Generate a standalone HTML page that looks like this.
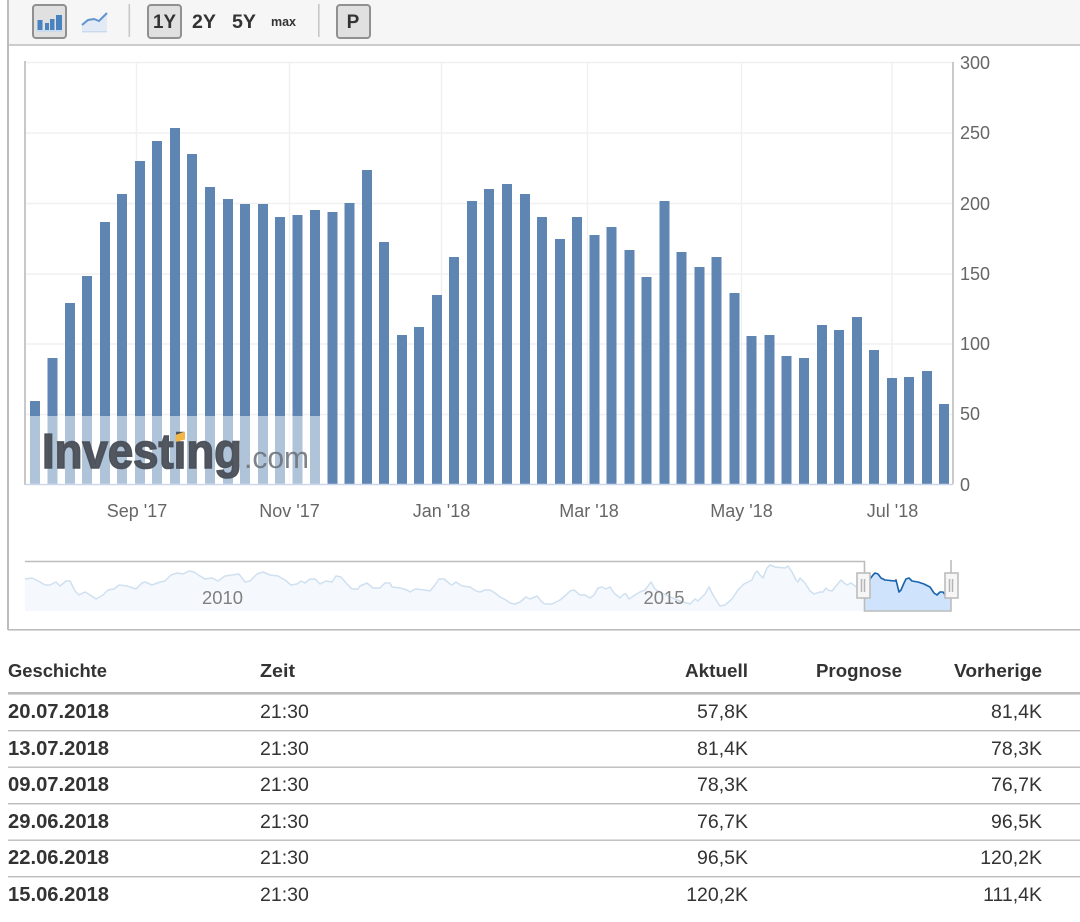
<!DOCTYPE html>
<html>
<head>
<meta charset="utf-8">
<style>
html,body{margin:0;padding:0;background:#fff;width:1080px;height:922px;overflow:hidden}
svg{display:block}
text{font-family:"Liberation Sans",sans-serif}
.ax{font-size:18px;fill:#666}
.h{font-size:18.5px;font-weight:bold;fill:#333}
.d{font-size:20.2px;font-weight:bold;fill:#333}
.t{font-size:19.5px;fill:#333}
.b{font-size:19px;font-weight:bold;fill:#333}
</style>
</head>
<body>
<svg width="1080" height="922" viewBox="0 0 1080 922" xmlns="http://www.w3.org/2000/svg">
<!-- toolbar -->
<rect x="8" y="0" width="1072" height="44" fill="#f6f6f6"/>
<rect x="8" y="44" width="1072" height="2" fill="#cccccc"/>
<rect x="7" y="0" width="2" height="630" fill="#bcbcbc"/>
<rect x="8" y="629" width="1072" height="1.6" fill="#bcbcbc"/>

<rect x="33" y="5" width="33" height="33" rx="3" fill="#e0e0e0" stroke="#909090" stroke-width="2"/>
<rect x="37.5" y="20" width="5" height="10" fill="#4a82c0"/>
<rect x="45" y="23" width="4" height="7" fill="#4a82c0"/>
<rect x="50" y="19" width="4.5" height="11" fill="#4a82c0"/>
<rect x="56" y="15" width="6" height="15" fill="#4a82c0"/>
<rect x="37" y="30" width="25" height="2" fill="#c9d9ee"/>

<path d="M82 25 L88 20 L94 19 L99 21 L107 13 L107 32 L82 32 Z" fill="#e2eaf5"/>
<path d="M82 25 L88 20 L94 19 L99 21 L107 13" fill="none" stroke="#5f94d0" stroke-width="2"/>
<rect x="82" y="31" width="25" height="1.4" fill="#c9d9ee"/>

<rect x="128.5" y="4" width="1.6" height="33" fill="#c8c8c8"/>
<rect x="148" y="5" width="33" height="33" rx="3" fill="#e0e0e0" stroke="#909090" stroke-width="2"/>
<text class="b" x="164.5" y="28" text-anchor="middle" textLength="23" lengthAdjust="spacingAndGlyphs">1Y</text>
<text class="b" x="204" y="28" text-anchor="middle" textLength="24" lengthAdjust="spacingAndGlyphs">2Y</text>
<text class="b" x="244" y="28" text-anchor="middle" textLength="24" lengthAdjust="spacingAndGlyphs">5Y</text>
<text x="283.5" y="26" text-anchor="middle" font-size="12.5" font-weight="bold" fill="#333">max</text>
<rect x="318" y="4" width="1.6" height="33" fill="#c8c8c8"/>
<rect x="337" y="5" width="33" height="33" rx="3" fill="#e0e0e0" stroke="#909090" stroke-width="2"/>
<text class="b" x="353" y="28" text-anchor="middle">P</text>

<!-- grid -->
<g stroke="#f0f0f0" stroke-width="1.4">
<path d="M25 62.5H953M25 133H953M25 203.5H953M25 274H953M25 344H953M25 414.5H953"/>
<path d="M136.5 62V484M289.5 62V484M441.5 62V484M587.5 62V484M741.5 62V484M892 62V484"/>
</g>
<path d="M25 61V485" stroke="#bbb" stroke-width="1.6"/>
<path d="M953 62V484" stroke="#b4b4b4" stroke-width="1.4"/>

<!-- bars -->
<g fill="#5f86b3">
<rect x="30" y="401" width="10" height="83"/>
<rect x="47.5" y="358" width="10" height="126"/>
<rect x="65" y="303" width="10" height="181"/>
<rect x="82" y="276" width="10" height="208"/>
<rect x="100" y="222" width="10" height="262"/>
<rect x="117" y="194" width="10" height="290"/>
<rect x="135" y="161" width="10" height="323"/>
<rect x="152" y="141" width="10" height="343"/>
<rect x="170" y="128" width="10" height="356"/>
<rect x="187" y="154" width="10" height="330"/>
<rect x="205" y="187" width="10" height="297"/>
<rect x="223" y="199" width="10" height="285"/>
<rect x="240" y="204" width="10" height="280"/>
<rect x="258" y="204" width="10" height="280"/>
<rect x="275" y="217" width="10" height="267"/>
<rect x="292.5" y="215" width="10" height="269"/>
<rect x="310" y="210" width="10" height="274"/>
<rect x="327.5" y="212" width="10" height="272"/>
<rect x="344.5" y="203" width="10" height="281"/>
<rect x="362" y="170" width="10" height="314"/>
<rect x="379" y="242" width="10" height="242"/>
<rect x="397" y="335" width="10" height="149"/>
<rect x="414" y="327" width="10" height="157"/>
<rect x="432" y="295" width="10" height="189"/>
<rect x="449" y="257" width="10" height="227"/>
<rect x="467" y="201" width="10" height="283"/>
<rect x="484" y="189" width="10" height="295"/>
<rect x="502" y="184" width="10" height="300"/>
<rect x="520" y="194" width="10" height="290"/>
<rect x="537" y="217" width="10" height="267"/>
<rect x="555" y="239" width="10" height="245"/>
<rect x="572" y="217" width="10" height="267"/>
<rect x="589.5" y="235" width="10" height="249"/>
<rect x="606.5" y="227" width="10" height="257"/>
<rect x="624.5" y="250" width="10" height="234"/>
<rect x="641.5" y="277" width="10" height="207"/>
<rect x="659.5" y="201" width="10" height="283"/>
<rect x="676.5" y="252" width="10" height="232"/>
<rect x="694.5" y="267" width="10" height="217"/>
<rect x="711.5" y="257" width="10" height="227"/>
<rect x="729.5" y="293" width="10" height="191"/>
<rect x="746.5" y="336" width="10" height="148"/>
<rect x="764.5" y="335" width="10" height="149"/>
<rect x="781.5" y="356" width="10" height="128"/>
<rect x="799" y="358" width="10" height="126"/>
<rect x="817" y="325" width="10" height="159"/>
<rect x="834" y="330" width="10" height="154"/>
<rect x="852" y="317" width="10" height="167"/>
<rect x="869" y="350" width="10" height="134"/>
<rect x="887" y="378" width="10" height="106"/>
<rect x="904" y="377" width="10" height="107"/>
<rect x="922" y="371" width="10" height="113"/>
<rect x="939" y="404" width="10" height="80"/>
</g>
<path d="M25 484.5H953" stroke="#ccd6eb" stroke-width="1.4"/>

<!-- watermark -->
<rect x="26" y="416" width="294" height="68" fill="#fff" fill-opacity=".5"/>
<text x="42" y="468" font-size="49" font-weight="bold" fill="#4a4f57" stroke="#4a4f57" stroke-width="1.6" fill-opacity=".95" stroke-opacity=".95" textLength="200" lengthAdjust="spacingAndGlyphs">Investing</text>
<polygon points="175.5,435 185,431.5 185,439.5 175.5,442" fill="#f2b648"/>
<text x="244" y="468" font-size="31" fill="#6a6e75" fill-opacity=".85" textLength="65" lengthAdjust="spacingAndGlyphs">.com</text>

<!-- axis labels -->
<text class="ax" x="960" y="69">300</text>
<text class="ax" x="960" y="139">250</text>
<text class="ax" x="960" y="210">200</text>
<text class="ax" x="960" y="280">150</text>
<text class="ax" x="960" y="350">100</text>
<text class="ax" x="960" y="420">50</text>
<text class="ax" x="960" y="491">0</text>
<g class="ax" text-anchor="middle">
<text class="ax" x="137" y="517">Sep '17</text>
<text class="ax" x="289.5" y="517">Nov '17</text>
<text class="ax" x="441.5" y="517">Jan '18</text>
<text class="ax" x="589" y="517">Mar '18</text>
<text class="ax" x="741.5" y="517">May '18</text>
<text class="ax" x="892.5" y="517">Jul '18</text>
</g>

<!-- navigator -->
<path d="M25 579L32 578L40 582L45 585L50 585L56 582L60 586L66 581L70 581L75 591L79 595L85 592L90 595L96 599L103 595L108 590L114 589L119 585L127 586L136 589L142 583L145 582L152 585L160 582L165 581L171 575L177 573L183 574L189 571L194 572L200 576L205 579L212 578L218 581L225 576L232 575L239 574L245 582L250 581L257 574L263 572L270 575L278 576L285 580L291 585L297 584L301 581L305 583L310 579L315 579L320 584L326 581L332 582L336 576L341 577L347 584L352 589L358 589L360 586L367 583L373 588L380 588L385 583L390 583L392 587L400 588L407 590L410 592L415 589L425 590L430 591L435 585L439 579L444 579L450 584L452 585L456 582L462 586L470 587L476 591L480 592L485 590L490 590L495 593L500 597L506 600L510 603L515 604L520 602L526 597L530 599L537 596L542 602L545 604L552 604L560 600L566 595L570 591L574 590L580 595L585 595L590 598L594 595L598 588L602 587L606 589L610 587L614 593L620 598L624 594L626 594L629 599L635 595L640 592L645 590L648 586L651 582L655 589L660 592L670 597L680 601L690 604L695 599L698 601L705 594L709 587L713 595L718 603L720 606L725 605L732 599L738 590L744 584L752 580L755 573L757 571L760 575L763 578L767 568L770 565L775 567L785 568L788 566L792 572L796 580L798 582L800 578L805 583L810 591L814 594L820 592L823 592L826 588L828 590L832 591L836 586L841 580L844 583L847 585L851 583L855 586L860 590L864 590L864 611L25 611Z" fill="#f5f9fe"/>
<path d="M25 579L32 578L40 582L45 585L50 585L56 582L60 586L66 581L70 581L75 591L79 595L85 592L90 595L96 599L103 595L108 590L114 589L119 585L127 586L136 589L142 583L145 582L152 585L160 582L165 581L171 575L177 573L183 574L189 571L194 572L200 576L205 579L212 578L218 581L225 576L232 575L239 574L245 582L250 581L257 574L263 572L270 575L278 576L285 580L291 585L297 584L301 581L305 583L310 579L315 579L320 584L326 581L332 582L336 576L341 577L347 584L352 589L358 589L360 586L367 583L373 588L380 588L385 583L390 583L392 587L400 588L407 590L410 592L415 589L425 590L430 591L435 585L439 579L444 579L450 584L452 585L456 582L462 586L470 587L476 591L480 592L485 590L490 590L495 593L500 597L506 600L510 603L515 604L520 602L526 597L530 599L537 596L542 602L545 604L552 604L560 600L566 595L570 591L574 590L580 595L585 595L590 598L594 595L598 588L602 587L606 589L610 587L614 593L620 598L624 594L626 594L629 599L635 595L640 592L645 590L648 586L651 582L655 589L660 592L670 597L680 601L690 604L695 599L698 601L705 594L709 587L713 595L718 603L720 606L725 605L732 599L738 590L744 584L752 580L755 573L757 571L760 575L763 578L767 568L770 565L775 567L785 568L788 566L792 572L796 580L798 582L800 578L805 583L810 591L814 594L820 592L823 592L826 588L828 590L832 591L836 586L841 580L844 583L847 585L851 583L855 586L860 590" fill="none" stroke="#cfe0f0" stroke-width="1.5" stroke-linejoin="round"/>
<path d="M865 590L870 579L873 575L875 573L878 574L881 578L885 580L895 581L896 580L899 592L901 590L904 583L906 579L909 578L912 581L918 582L924 584L930 587L934 593L937 595L940 592L943 592L946 596L951 597L951 611L865 611Z" fill="#cfe4fc"/>
<path d="M869 585L870 579L873 575L875 573L878 574L881 578L885 580L895 581L896 580L899 592L901 590L904 583L906 579L909 578L912 581L918 582L924 584L930 587L934 593L937 595L940 592L943 592L946 596L950 597" fill="none" stroke="#1763ad" stroke-width="1.6" stroke-linejoin="round"/>
<path d="M25 561.5H864.5V611H951V560" fill="none" stroke="#bcbcbc" stroke-width="1.6"/>
<text x="222.5" y="604" font-size="18.4" fill="#808080" text-anchor="middle">2010</text>
<text x="664" y="604" font-size="18.4" fill="#808080" text-anchor="middle">2015</text>
<rect x="857" y="573" width="13" height="25" fill="#f6f6f6" stroke="#bcbcbc" stroke-width="1.6"/>
<path d="M861.5 579V592M864.5 579V592" stroke="#b4b4b4" stroke-width="1.5"/>
<rect x="945" y="573" width="13" height="25" fill="#f6f6f6" stroke="#bcbcbc" stroke-width="1.6"/>
<path d="M949.5 579V592M952.5 579V592" stroke="#b4b4b4" stroke-width="1.5"/>

<!-- table -->
<text class="h" x="8" y="677" textLength="99" lengthAdjust="spacingAndGlyphs">Geschichte</text>
<text class="h" x="260" y="677" textLength="35" lengthAdjust="spacingAndGlyphs">Zeit</text>
<text class="h" x="685" y="677" textLength="63" lengthAdjust="spacingAndGlyphs">Aktuell</text>
<text class="h" x="816" y="677" textLength="86" lengthAdjust="spacingAndGlyphs">Prognose</text>
<text class="h" x="954" y="677" textLength="88" lengthAdjust="spacingAndGlyphs">Vorherige</text>
<rect x="8" y="692" width="1072" height="2.6" fill="#bcbcbc"/>
<g fill="#bcbcbc">
<rect x="8" y="730" width="1072" height="1.4"/>
<rect x="8" y="766.5" width="1072" height="1.4"/>
<rect x="8" y="803" width="1072" height="1.4"/>
<rect x="8" y="839.5" width="1072" height="1.4"/>
<rect x="8" y="876" width="1072" height="1.4"/>
</g>
<text class="d" x="8" y="718">20.07.2018</text><text class="t" x="260" y="718">21:30</text><text class="t" x="748" y="718" text-anchor="end">57,8K</text><text class="t" x="1042" y="718" text-anchor="end">81,4K</text>
<text class="d" x="8" y="755">13.07.2018</text><text class="t" x="260" y="755">21:30</text><text class="t" x="748" y="755" text-anchor="end">81,4K</text><text class="t" x="1042" y="755" text-anchor="end">78,3K</text>
<text class="d" x="8" y="791">09.07.2018</text><text class="t" x="260" y="791">21:30</text><text class="t" x="748" y="791" text-anchor="end">78,3K</text><text class="t" x="1042" y="791" text-anchor="end">76,7K</text>
<text class="d" x="8" y="828">29.06.2018</text><text class="t" x="260" y="828">21:30</text><text class="t" x="748" y="828" text-anchor="end">76,7K</text><text class="t" x="1042" y="828" text-anchor="end">96,5K</text>
<text class="d" x="8" y="864">22.06.2018</text><text class="t" x="260" y="864">21:30</text><text class="t" x="748" y="864" text-anchor="end">96,5K</text><text class="t" x="1042" y="864" text-anchor="end">120,2K</text>
<text class="d" x="8" y="901">15.06.2018</text><text class="t" x="260" y="901">21:30</text><text class="t" x="748" y="901" text-anchor="end">120,2K</text><text class="t" x="1042" y="901" text-anchor="end">111,4K</text>
</svg>
</body>
</html>
